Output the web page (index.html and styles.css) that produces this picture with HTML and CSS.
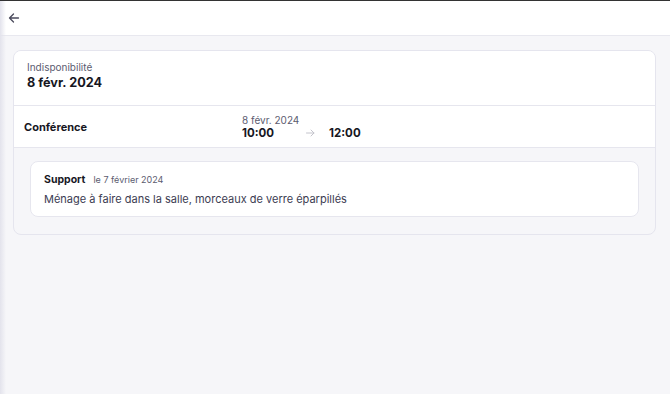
FILE: index.html
```html
<!DOCTYPE html>
<html lang="fr">
  <head>
    <meta charset="UTF-8" />
    <meta name="viewport" content="width=device-width, initial-scale=1.0" />
    <title>Indisponibilité</title>
    <link rel="stylesheet" href="styles.css">
  </head>
  <body>
    <div class="page">
      <header class="topbar">
        <button class="back" aria-label="Retour">
          <svg width="12" height="12" viewBox="0 0 12 12" fill="none" stroke="#4a4a5c" stroke-width="1.3" stroke-linecap="round" stroke-linejoin="round">
            <path d="M10.5 6H1.5M5.5 2L1.5 6L5.5 10"/>
          </svg>
        </button>
      </header>
      <main class="content">
        <div class="card">
          <div class="card_head">
            <div class="label">Indisponibilité</div>
            <div class="title">8 févr. 2024</div>
          </div>
          <div class="event">
            <div class="event_name">Conférence</div>
            <div class="event_time">
              <div class="event_date">8 févr. 2024</div>
              <div class="hours">
                <span class="hour">10:00</span>
                <svg class="arrow" width="9" height="8" viewBox="0 0 9 8" fill="none" stroke="#c4c4cc" stroke-width="1" stroke-linecap="round" stroke-linejoin="round">
                  <path d="M0.5 4H8M5 1L8 4L5 7"/>
                </svg>
                <span class="hour">12:00</span>
              </div>
            </div>
          </div>
          <div class="notes">
            <div class="note">
              <div class="note_head">
                <span class="author">Support</span>
                <span class="when">le 7 février 2024</span>
              </div>
              <div class="note_text">Ménage à faire dans la salle, morceaux de verre éparpillés</div>
            </div>
          </div>
        </div>
      </main>
    </div>
  </body>
</html>
```
FILE: styles.css
```css
* {
  padding: 0;
  margin: 0;
  box-sizing: border-box;
}
body {
  font-family: Inter, "Noto Sans", sans-serif;
  background-color: #f6f6f9;
  color: #17171f;
}
.page {
  position: relative;
  min-height: 394px;
  border-top: 1px solid #333;
}
.page::before {
  content: '';
  position: absolute;
  left: 0;
  top: 0;
  bottom: 0;
  width: 6px;
  background: linear-gradient(to right, #e3e3ec, rgba(246, 246, 249, 0));
}
.topbar {
  height: 35px;
  background-color: #fff;
  border-bottom: 1px solid #e8e8ef;
  display: flex;
  align-items: center;
  padding-left: 8px;
}
.back {
  border: none;
  background: none;
  display: flex;
  align-items: center;
  padding: 0;
}
.content {
  padding: 14px 14px 0 13px;
}
.card {
  background-color: #f6f6f9;
  border: 1px solid #e5e5ee;
  border-radius: 8px;
  overflow: hidden;
}
.card_head {
  background-color: #fff;
  padding: 10px 13px 14px;
  border-bottom: 1px solid #e6e6ee;
  height: 55px;
}
.label {
  font-size: 10px;
  color: #5c5c70;
  line-height: 13px;
}
.title {
  font-size: 12.7px;
  font-weight: 700;
  line-height: 17px;
}
.event {
  background-color: #fff;
  border-bottom: 1px solid #e6e6ee;
  height: 42px;
  display: flex;
  align-items: center;
  padding-left: 10px;
}
.event_name {
  width: 218px;
  font-size: 11px;
  font-weight: 700;
  padding-top: 1px;
}
.event_date {
  font-size: 10px;
  color: #5c5c70;
  line-height: 12px;
}
.hours {
  display: flex;
  align-items: center;
}
.hour {
  font-size: 11.5px;
  font-weight: 700;
  line-height: 14px;
}
.arrow {
  margin: 0 14px 0 32px;
}
.notes {
  padding: 13px 16px 17px 16px;
}
.note {
  background-color: #fff;
  border: 1px solid #e6e6ee;
  border-radius: 8px;
  padding: 11px 13px 10px;
}
.note_head {
  display: flex;
  align-items: baseline;
  gap: 8px;
}
.author {
  font-size: 10.5px;
  font-weight: 700;
}
.when {
  font-size: 9px;
  color: #5c5c70;
}
.note_text {
  font-size: 11px;
  color: #3c3c52;
  margin-top: 6px;
}
```
